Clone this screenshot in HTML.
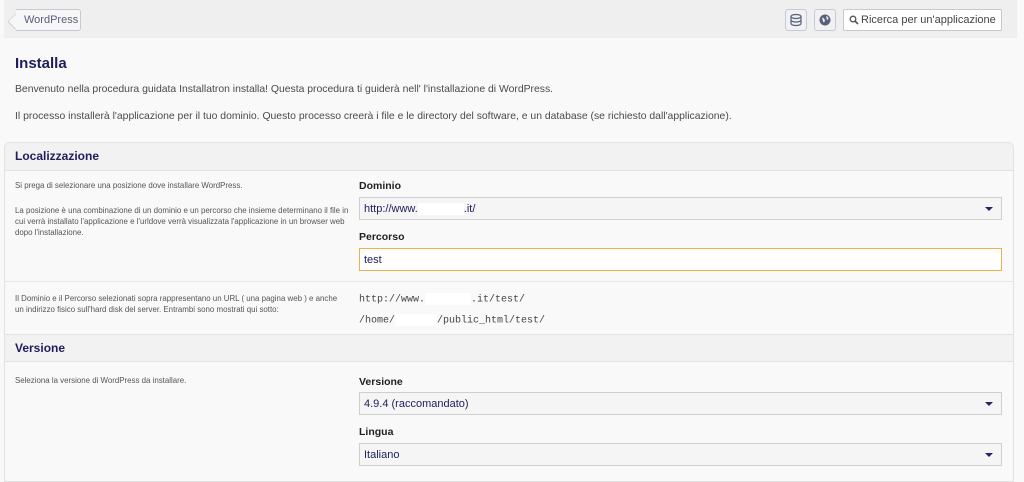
<!DOCTYPE html>
<html><head><meta charset="utf-8"><style>
*{box-sizing:border-box;margin:0;padding:0}
body{width:1024px;height:476px;overflow:hidden;background:#f9f9f9;font-family:"Liberation Sans",sans-serif;color:#333;position:relative}
.abs{position:absolute}
.top{left:4px;top:0;width:1013px;height:38px;background:#efefef}
.back{left:16px;top:9px;width:65px;height:22px;border:1px solid #c5cad6;border-left:none;border-radius:0 3px 3px 0;background:#f7f7f7;font-size:11px;color:#56607a;padding:4px 0 0 8px}
.arr{left:9px;top:12px;width:16px;height:16px;border-left:1px solid #c5cad6;border-bottom:1px solid #c5cad6;background:#f7f7f7;transform:rotate(45deg) scale(.7,1);border-radius:0 0 0 2px}
.ib{top:9px;width:22px;height:22px;border:1px solid #c5cad6;border-radius:3px;background:#f1f1f3}
.search{left:843px;top:9px;width:159px;height:22px;border:1px solid #c9c9c9;border-radius:2px;background:#fff;font-size:11px;color:#444;padding:4px 0 0 17px}
h1{position:absolute;left:15px;top:55px;font-size:15px;color:#1d1e5c;font-weight:bold}
.p{left:15px;font-size:10.4px;color:#4a4a4a}
.panel{left:4px;top:142px;width:1010px;height:340px;border:1px solid #e2e2e2;border-radius:6px 6px 0 0;background:#f9f9f9;overflow:hidden}
.hd{left:0;width:1010px;height:28px;background:#f2f2f2;border-bottom:1px solid #e2e2e2;font-size:12px;font-weight:bold;color:#1d1e5c;padding:6px 0 0 10px}
.sep{left:0;width:1010px;height:1px;background:#e6e6e6}
.s{font-size:7.9px;color:#555;line-height:11px}
.lbl{font-size:10.5px;font-weight:bold;color:#222}
.sel{left:354px;width:643px;height:23px;border:1px solid #cfcfcf;background:#f5f5f5;font-size:11px;color:#1d1e5c;padding:5px 0 0 4px}
.sel:after{content:"";position:absolute;right:8px;top:9px;border-left:4px solid transparent;border-right:4px solid transparent;border-top:4px solid #23256a}
.mono{font-family:"Liberation Mono",monospace;font-size:10px;color:#444}
.w{background:#fff;display:inline-block;height:12px;vertical-align:middle}
</style></head><body>
<div class="abs top"></div>
<div class="abs arr"></div>
<div class="abs back">WordPress</div>
<div class="abs ib" style="left:785px"><svg width="20" height="20" viewBox="0 0 20 20"><g fill="none" stroke="#55607a" stroke-width="1.2"><ellipse cx="10" cy="6.5" rx="5" ry="2"/><path d="M5 6.5v7c0 1.1 2.2 2 5 2s5-.9 5-2v-7M5 10c0 1.1 2.2 2 5 2s5-.9 5-2"/></g></svg></div>
<div class="abs ib" style="left:814px"><svg width="20" height="20" viewBox="0 0 20 20"><circle cx="10" cy="10" r="5.5" fill="#55607a"/><path d="M7 7.5l2 1 1 2-1 2-1-1zM11 6l2 1 .5 2-1.5 1z" fill="#f1f1f3"/></svg></div>
<div class="abs search"><svg class="abs" style="left:5px;top:5px" width="10" height="10" viewBox="0 0 10 10"><circle cx="4" cy="4" r="2.8" fill="none" stroke="#555" stroke-width="1.3"/><path d="M6 6l3 3" stroke="#555" stroke-width="1.6"/></svg>Ricerca per un'applicazione</div>
<h1>Installa</h1>
<div class="abs p" style="top:84px">Benvenuto nella procedura guidata Installatron installa! Questa procedura ti guiderà nell' l'installazione di WordPress.</div>
<div class="abs p" style="top:111px">Il processo installerà l'applicazione per il tuo dominio. Questo processo creerà i file e le directory del software, e un database (se richiesto dall'applicazione).</div>
<div class="abs panel">
 <div class="abs hd" style="top:0">Localizzazione</div>
 <div class="abs s" style="left:10px;top:37px">Si prega di selezionare una posizione dove installare WordPress.</div>
 <div class="abs s" style="left:10px;top:62px;width:338px">La posizione è una combinazione di un dominio e un percorso che insieme determinano il file in cui verrà installato l'applicazione e l'urldove verrà visualizzata l'applicazione in un browser web dopo l'installazione.</div>
 <div class="abs lbl" style="left:354px;top:37px">Dominio</div>
 <div class="abs sel" style="top:54px">http://www.<span class="w" style="width:46px"></span>.it/</div>
 <div class="abs lbl" style="left:354px;top:88px">Percorso</div>
 <div class="abs" style="left:354px;top:105px;width:643px;height:23px;border:1px solid #f0b050;background:#fff;font-size:11px;color:#1d1e5c;padding:5px 0 0 4px">test</div>
 <div class="abs sep" style="top:138px"></div>
 <div class="abs s" style="left:10px;top:150px;width:330px">Il Dominio e il Percorso selezionati sopra rappresentano un URL ( una pagina web ) e anche un indirizzo fisico sull'hard disk del server. Entrambi sono mostrati qui sotto:</div>
 <div class="abs mono" style="left:354px;top:150px">http://www.<span class="w" style="width:46px"></span>.it/test/</div>
 <div class="abs mono" style="left:354px;top:171px">/home/<span class="w" style="width:42px"></span>/public_html/test/</div>
 <div class="abs hd" style="top:191px;border-top:1px solid #e2e2e2">Versione</div>
 <div class="abs s" style="left:10px;top:232px">Seleziona la versione di WordPress da installare.</div>
 <div class="abs lbl" style="left:354px;top:233px">Versione</div>
 <div class="abs sel" style="top:249px">4.9.4 (raccomandato)</div>
 <div class="abs lbl" style="left:354px;top:283px">Lingua</div>
 <div class="abs sel" style="top:300px">Italiano</div>
</div>
</body></html>
